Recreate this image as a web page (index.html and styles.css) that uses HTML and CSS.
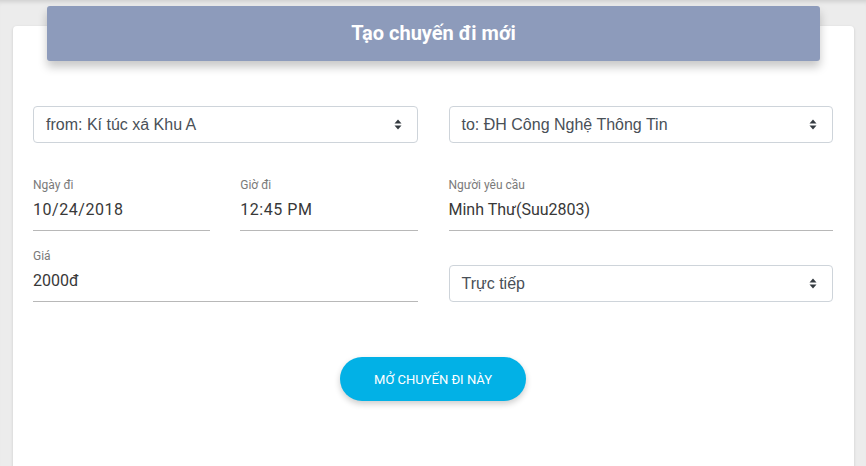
FILE: index.html
```html
<!DOCTYPE html>
<html lang="vi">
<head>
<meta charset="utf-8">
<title>Tạo chuyến đi mới</title>
<link rel="stylesheet" href="styles.css">
</head>
<body>
<div class="page">
  <div class="card">
    <div class="card-header">Tạo chuyến đi mới</div>
    <form class="form">
      <div class="row row-selects">
        <div class="select">
          <span>from: Kí túc xá Khu A</span>
          <svg class="caret" width="8" height="11" viewBox="0 0 8 11"><path d="M4 0.5 L7.5 4.5 H0.5 Z M4 10.5 L7.5 6.5 H0.5 Z" fill="#343a40"/></svg>
        </div>
        <div class="select">
          <span>to: ĐH Công Nghệ Thông Tin</span>
          <svg class="caret" width="8" height="11" viewBox="0 0 8 11"><path d="M4 0.5 L7.5 4.5 H0.5 Z M4 10.5 L7.5 6.5 H0.5 Z" fill="#343a40"/></svg>
        </div>
      </div>
      <div class="row row-fields">
        <div class="pair">
          <div class="field">
            <label class="label">Ngày đi</label>
            <div class="value value-spaced">10/24/2018</div>
          </div>
          <div class="field">
            <label class="label">Giờ đi</label>
            <div class="value value-spaced">12:45 PM</div>
          </div>
        </div>
        <div class="field">
          <label class="label">Người yêu cầu</label>
          <div class="value">Minh Thư(Suu2803)</div>
        </div>
      </div>
      <div class="row row-bottom">
        <div class="field">
          <label class="label">Giá</label>
          <div class="value">2000đ</div>
        </div>
        <div class="select">
          <span>Trực tiếp</span>
          <svg class="caret" width="8" height="11" viewBox="0 0 8 11"><path d="M4 0.5 L7.5 4.5 H0.5 Z M4 10.5 L7.5 6.5 H0.5 Z" fill="#343a40"/></svg>
        </div>
      </div>
      <div class="actions">
        <button type="button" class="btn">Mở chuyến đi này</button>
      </div>
    </form>
  </div>
</div>
</body>
</html>
```

FILE: styles.css
```css
html, body {
  margin: 0;
  padding: 0;
  height: 100%;
}
body {
  background: #ececec;
  box-shadow: inset 0 5px 4px -3px rgba(0, 0, 0, 0.12);
  font-family: Roboto, "Noto Sans", sans-serif;
  overflow: hidden;
}
.page {
  padding: 26px 12px 0 13px;
}
.card {
  background: #fff;
  border-radius: 4px;
  min-height: 460px;
  box-shadow: 0 1px 3px rgba(0, 0, 0, 0.15);
}
.card-header {
  position: relative;
  top: -20px;
  margin: 0 34px -20px;
  height: 55px;
  background: #8d9bbb;
  border-radius: 3px;
  color: #fff;
  font-size: 20px;
  font-weight: 700;
  line-height: 55px;
  text-align: center;
  box-shadow: 0 6px 10px rgba(0, 0, 0, 0.22);
}
.form {
  padding: 45px 21px 0 20px;
}
.row {
  display: grid;
  grid-template-columns: 1fr 1fr;
  column-gap: 31px;
}
.row-fields {
  margin-top: 35px;
}
.row-bottom {
  margin-top: 18px;
  align-items: end;
}
.pair {
  display: grid;
  grid-template-columns: 1fr 1fr;
  column-gap: 30px;
}
.select {
  display: flex;
  align-items: center;
  justify-content: space-between;
  height: 37px;
  box-sizing: border-box;
  border: 1px solid #ced4da;
  border-radius: 4px;
  padding: 0 12px;
  font-family: "Liberation Sans", Arial, sans-serif;
  font-size: 16px;
  color: #495057;
}
.caret {
  display: block;
  margin-right: 3px;
}
.field {
  display: flex;
  flex-direction: column;
}
.label {
  font-size: 12px;
  line-height: 14px;
  color: #7a7a7a;
}
.value {
  font-size: 16px;
  line-height: 20px;
  padding: 8px 0 10px;
  color: #383838;
  border-bottom: 1px solid #b8b8b8;
}
.value-spaced {
  letter-spacing: 0.55px;
}
.actions {
  display: flex;
  justify-content: center;
  margin-top: 55px;
}
.btn {
  width: 186px;
  height: 44px;
  border: none;
  border-radius: 22px;
  background: #02b1e6;
  color: #fff;
  font-family: Roboto, sans-serif;
  font-size: 13px;
  text-transform: uppercase;
  box-shadow: 0 3px 6px rgba(0, 0, 0, 0.2);
  padding: 0;
}
```
